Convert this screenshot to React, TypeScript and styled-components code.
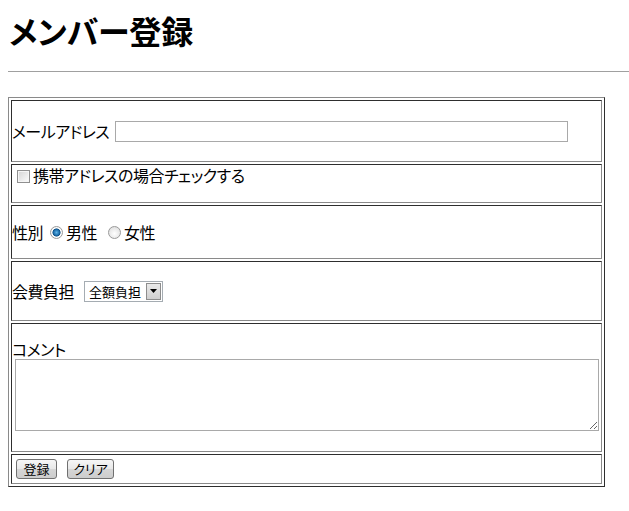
import React from "react";
import styled, { createGlobalStyle } from "styled-components";

const GlobalStyle = createGlobalStyle`
  html, body {
    margin: 0;
    padding: 0;
    background: #ffffff;
  }
  body {
    font-family: "Noto Sans CJK JP", "Liberation Sans", sans-serif;
    color: #000000;
  }
`;

const Page = styled.div`
  padding: 0 0 0 8px;
`;

const Title = styled.h1`
  margin: 0;
  padding: 12px 0 0 1px;
  height: 44px;
  font-size: 32px;
  line-height: 36px;
  font-weight: 700;
  font-feature-settings: "palt";
`;

const Rule = styled.hr`
  margin: 15px 0 0 0;
  height: 0;
  border: none;
  border-top: 1px solid #a0a0a0;
`;

const FormTable = styled.table`
  margin-top: 25px;
  width: 597px;
  border-collapse: separate;
  border-spacing: 2px;
  border-style: solid;
  border-width: 1px;
  border-color: #8a8a8a #2e2e2e #2e2e2e #8a8a8a;
`;

const Cell = styled.td<{ $h: number; $top?: boolean }>`
  height: ${(p) => p.$h}px;
  padding: ${(p) => (p.$top ? "1px 0 0 0" : "0")};
  vertical-align: ${(p) => (p.$top ? "top" : "middle")};
  border-style: solid;
  border-width: 1px;
  border-color: #2e2e2e #8a8a8a #8a8a8a #2e2e2e;
  box-sizing: border-box;
`;

const Line = styled.div<{ $gap?: number }>`
  display: flex;
  align-items: center;
  gap: ${(p) => p.$gap ?? 0}px;
  font-size: 16px;
  line-height: 19px;
  letter-spacing: -0.5px;
  font-feature-settings: "palt";
`;

const Label = styled.span`
  white-space: nowrap;
`;

const TextInput = styled.input`
  box-sizing: border-box;
  width: 453px;
  height: 21px;
  margin: 0;
  padding: 1px 3px;
  border: 1px solid #a9a9a9;
  font: inherit;
  outline: none;
`;

const CheckBox = styled.input`
  appearance: none;
  box-sizing: border-box;
  width: 13px;
  height: 13px;
  margin: 2px 3px 0 5px;
  border: 1px solid #8f8f8f;
  background: linear-gradient(135deg, #d4d4d4 0%, #f4f4f4 80%, #ffffff 100%);
  box-shadow: inset 0 0 0 1px #f5f5f5;
  flex-shrink: 0;
`;

const Radio = styled.input`
  appearance: none;
  box-sizing: border-box;
  width: 13px;
  height: 13px;
  margin: 0 3px 0 0;
  border-radius: 50%;
  border: 1px solid #9a9a9a;
  background: radial-gradient(circle at 50% 60%, #ffffff 0%, #e4e4e4 70%, #cfcfcf 100%);
  flex-shrink: 0;

  &:checked {
    background: radial-gradient(circle at 50% 50%, #5fb4e8 0%, #1a6aa8 38%, #0f4d80 48%, #ffffff 56%, #e9e9e9 100%);
  }
`;

const Choice = styled.label<{ $gap?: number }>`
  display: flex;
  align-items: center;
  margin-left: ${(p) => p.$gap ?? 0}px;
`;

const SelectBox = styled.div`
  display: flex;
  align-items: stretch;
  box-sizing: border-box;
  width: 79px;
  height: 21px;
  border: 1px solid #a5acb2;
  background: #ffffff;
`;

const NativeSelect = styled.select`
  appearance: none;
  flex: 1;
  min-width: 0;
  margin: 0;
  padding: 0 0 0 4px;
  border: none;
  background: transparent;
  font-family: inherit;
  font-size: 13px;
  font-feature-settings: "palt";
  color: #000000;
  outline: none;
`;

const Arrow = styled.span`
  display: flex;
  align-items: center;
  justify-content: center;
  width: 15px;
  margin: 1px;
  border: 1px solid #8d8d8d;
  box-sizing: border-box;
  background: linear-gradient(#e9e9e9, #cfcfcf);
`;

const Comment = styled.div`
  display: flex;
  flex-direction: column;
  font-size: 16px;
  line-height: 19px;
  letter-spacing: -0.5px;
  font-feature-settings: "palt";
  padding-bottom: 4px;
`;

const CommentArea = styled.textarea`
  box-sizing: border-box;
  width: 584px;
  height: 72px;
  margin: 0 0 0 3px;
  border: 1px solid #a9a9a9;
  font: inherit;
  outline: none;
`;

const ButtonRow = styled.div`
  display: flex;
  align-items: center;
  gap: 10px;
  padding-left: 4px;
`;

const Button = styled.button<{ $w: number }>`
  box-sizing: border-box;
  width: ${(p) => p.$w}px;
  height: 20px;
  margin: 0;
  padding: 0;
  border: 1px solid #707070;
  border-radius: 3px;
  background: linear-gradient(#f6f6f6 0%, #e8e8e8 50%, #d6d6d6 51%, #cdcdcd 100%);
  font-family: inherit;
  font-size: 13px;
  line-height: 16px;
  font-feature-settings: "palt";
  color: #000000;
`;

export default function App() {
  return (
    <Page>
      <GlobalStyle />
      <Title>メンバー登録</Title>
      <Rule />
      <FormTable>
        <tbody>
          <tr>
            <Cell $h={62}>
              <Line $gap={6}>
                <Label>メールアドレス</Label>
                <TextInput type="text" />
              </Line>
            </Cell>
          </tr>
          <tr>
            <Cell $h={39} $top>
              <Line>
                <CheckBox type="checkbox" />
                <Label>携帯アドレスの場合チェックする</Label>
              </Line>
            </Cell>
          </tr>
          <tr>
            <Cell $h={54}>
              <Line>
                <Label>性別</Label>
                <Choice $gap={7}>
                  <Radio type="radio" name="sex" defaultChecked />
                  男性
                </Choice>
                <Choice $gap={11}>
                  <Radio type="radio" name="sex" />
                  女性
                </Choice>
              </Line>
            </Cell>
          </tr>
          <tr>
            <Cell $h={60}>
              <Line $gap={10}>
                <Label>会費負担</Label>
                <SelectBox>
                  <NativeSelect defaultValue="all">
                    <option value="all">全額負担</option>
                    <option value="half">半額負担</option>
                  </NativeSelect>
                  <Arrow>
                    <svg width="7" height="4" viewBox="0 0 7 4">
                      <path d="M0 0 H7 L3.5 4 Z" fill="#000" />
                    </svg>
                  </Arrow>
                </SelectBox>
              </Line>
            </Cell>
          </tr>
          <tr>
            <Cell $h={129}>
              <Comment>
                <Label>コメント</Label>
                <CommentArea />
              </Comment>
            </Cell>
          </tr>
          <tr>
            <Cell $h={30}>
              <ButtonRow>
                <Button $w={41}>登録</Button>
                <Button $w={47}>クリア</Button>
              </ButtonRow>
            </Cell>
          </tr>
        </tbody>
      </FormTable>
    </Page>
  );
}
